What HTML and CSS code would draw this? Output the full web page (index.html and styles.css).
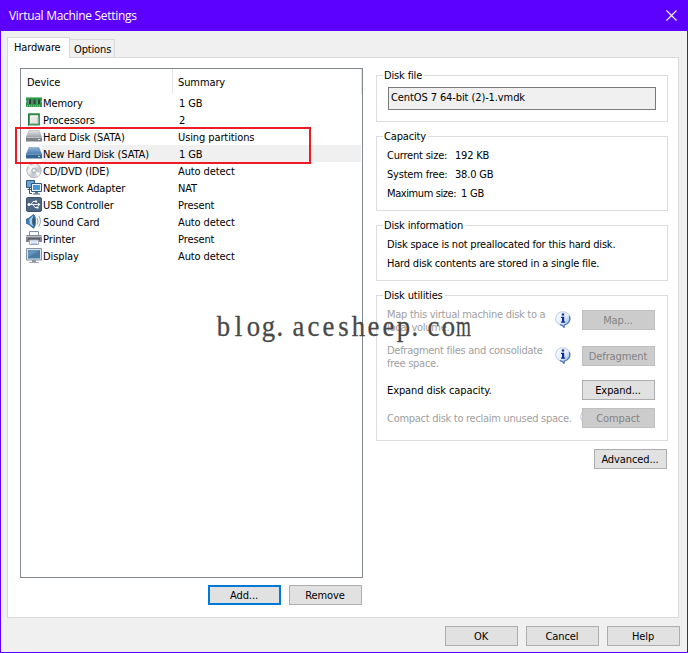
FILE: index.html
```html
<!DOCTYPE html>
<html lang="en">
<head>
<meta charset="utf-8">
<title>Virtual Machine Settings</title>
<link rel="stylesheet" href="styles.css">
</head>
<body>
<svg class="defs" width="0" height="0" aria-hidden="true">
  <defs>
    <linearGradient id="gInfo" x1="0" y1="0" x2="1" y2="1"><stop offset="0" stop-color="#fff"/><stop offset=".5" stop-color="#e4eefb"/><stop offset="1" stop-color="#7fa9dd"/></linearGradient>
    <linearGradient id="gGrey" x1="0" y1="0" x2="0" y2="1"><stop offset="0" stop-color="#e4e6e9"/><stop offset="1" stop-color="#9ea3aa"/></linearGradient>
    <linearGradient id="gBlue" x1="0" y1="0" x2="0" y2="1"><stop offset="0" stop-color="#8fb3d6"/><stop offset="1" stop-color="#4a7db0"/></linearGradient>
    <linearGradient id="gDisc" x1="0" y1="0" x2="1" y2="1"><stop offset="0" stop-color="#b4b8be"/><stop offset=".35" stop-color="#f4f4f6"/><stop offset=".6" stop-color="#c3c7cc"/><stop offset="1" stop-color="#eceef0"/></linearGradient>
    <symbol id="info" viewBox="0 0 16 17">
      <path d="M8 .8a7.2 6.8 0 0 0-3 13l2.200.7L9 16.600l.3-2.300A7.200 6.800 0 0 0 8 .8z" fill="url(#gInfo)" stroke="#a9bfdd" stroke-width=".8"/>
      <path d="M14.300 5.200a7 6.600 0 0 1-5 8.800L9 16.400 7.400 14.400 5 13.700" fill="none" stroke="#4d79b4" stroke-width="1.200"/>
      <path d="M6.800 2.500h2.400v2H6.800zM6 5.800h3.200v4.700h1v1.200H6v-1.200h1V7H6z" fill="#0b2d94"/>
    </symbol>
  </defs>
</svg>
<div class="window">
  <header class="titlebar">
    <span class="title">Virtual Machine Settings</span>
    <svg class="close" width="11" height="11" viewBox="0 0 11 11"><path d="M.5.5l10 10M10.5.5l-10 10" stroke="#fff" stroke-width="1.1"/></svg>
  </header>
  <main class="client">
    <nav class="tabs"><span class="tab active">Hardware</span><span class="tab">Options</span></nav>
    <section class="panel">
      <div class="left">
        <div class="list">
          <div class="head"><span class="c1">Device</span><span class="c2">Summary</span></div>
          <div class="row"><svg class="ic" viewBox="0 0 16 16"><path d="M0 2h16v3.500l-.7 1 .7 1V12H0V7.500l.7-1-.7-1z" fill="#2f9a4e"/><path d="M0 2.500h16" stroke="#7cc98b"/><path d="M2 4.500h3v4.500H2zM6.500 4.500h3v4.500h-3zM11 4.500h3v4.500h-3z" fill="#2c4438"/><path d="M2.500 4.500v4.500M7 4.500v4.500M11.500 4.500v4.500" stroke="#8ba393" stroke-width=".8"/><path d="M1 11h14" stroke="#b4d8ac" stroke-dasharray="1 1"/></svg><span class="name">Memory</span><span class="sum n">1 GB</span></div>
          <div class="row"><svg class="ic" viewBox="0 0 16 16"><path d="M2 1.500h12v12H2z" fill="#3a9c55"/><path d="M2.500 13.500V2h11" fill="none" stroke="#1f7a3b"/><path d="M4 3.500h8v8H4z" fill="#e4e7e5"/><path d="M4.500 11.500V4H12" fill="none" stroke="#fff"/><path d="M12 4.500v7H5" fill="none" stroke="#b3c4b8"/></svg><span class="name">Processors</span><span class="sum n">2</span></div>
          <div class="row"><svg class="ic" viewBox="0 0 16 16"><path d="M3 1.500h10l2.700 6.500H.3z" fill="url(#gGrey)" stroke="#a3a7ac" stroke-width=".5"/><path d="M0 8h16v4.500H0z" fill="#7c8188"/><path d="M.5 8.500h15" stroke="#c0c4c9"/><path d="M12 10h2v1h-2z" fill="#e6eaec"/></svg><span class="name">Hard Disk (SATA)</span><span class="sum">Using partitions</span></div>
          <div class="row selected"><svg class="ic" viewBox="0 0 16 16"><path d="M3 1.500h10l2.700 6.500H.3z" fill="url(#gBlue)" stroke="#6793bc" stroke-width=".5"/><path d="M0 8h16v4.500H0z" fill="#34648f"/><path d="M.5 8.500h15" stroke="#6796c0"/><path d="M12 10h2v1h-2z" fill="#b8d6ee"/></svg><span class="name">New Hard Disk (SATA)</span><span class="sum n">1 GB</span></div>
          <div class="row"><svg class="ic" viewBox="0 0 16 16"><circle cx="8" cy="7.500" r="7.200" fill="url(#gDisc)" stroke="#a4a8ad" stroke-width=".8"/><path d="M8 7.500L2 3.500 4 1.500zM8 7.500l6 3-2 3z" fill="#fff" opacity=".8"/><circle cx="8" cy="7.500" r="2.300" fill="#d6d9dd" stroke="#989da5" stroke-width=".7"/><circle cx="8" cy="7.500" r="1" fill="#fff"/></svg><span class="name">CD/DVD (IDE)</span><span class="sum">Auto detect</span></div>
          <div class="row"><svg class="ic" viewBox="0 0 16 16"><path d="M.5.5h8v7h-8z" fill="#6ba5d7" stroke="#31577f"/><path d="M3.500 8v5.500h2.500M1.500 9.500h4" fill="none" stroke="#31577f"/><path d="M5.500 3.500h10v8h-10z" fill="#e8eff5" stroke="#31577f"/><path d="M7 5h7v5H7z" fill="#4996d2"/><path d="M9 12h3v1.500H9z" fill="#527492"/><path d="M7 14h7" stroke="#31577f"/></svg><span class="name">Network Adapter</span><span class="sum">NAT</span></div>
          <div class="row"><svg class="ic" viewBox="0 0 16 16"><rect x=".5" y=".5" width="15" height="14" rx="1.500" fill="#4e6784" stroke="#3d546f"/><path d="M2 7.500h11M5 7.500l2-3h2.500M7 7.500l2 3h2" fill="none" stroke="#fff" stroke-width=".9"/><circle cx="3" cy="7.500" r="1.500" fill="#fff"/><path d="M12 5.700l2.500 1.800L12 9.300zM9 3.500h2v2H9zM10.500 9.500h2v2h-2z" fill="#fff"/></svg><span class="name">USB Controller</span><span class="sum">Present</span></div>
          <div class="row"><svg class="ic" viewBox="0 0 16 16"><path d="M.5 5L3 4 7.500.5q2 1 2 6.800t-2 7L3 10.500.5 9.500z" fill="#397eb5" stroke="#285b88" stroke-width=".8"/><path d="M3.500 5L7 2v10.500L3.500 9.500z" fill="#a8d1ed"/><ellipse cx="7.500" cy="7.300" rx="1.300" ry="4" fill="#315371"/><path d="M11 4q2 3.200 0 6.500M12.800 2q3.200 5.200 0 10.500" fill="none" stroke="#8197ac" stroke-width=".9"/></svg><span class="name">Sound Card</span><span class="sum">Auto detect</span></div>
          <div class="row"><svg class="ic" viewBox="0 0 16 16"><path d="M3.500.5h9V5h-9z" fill="#f8f9fb" stroke="#888e9a"/><path d="M1 4h14l1 1v6H0V5z" fill="#84868f"/><path d="M0 5.500h16" stroke="#bdbdca"/><path d="M2 8h12" stroke="#33353c"/><path d="M3.500 9h9v4.500h-9z" fill="#fff" stroke="#9ba4bf"/><path d="M5 11h6M5 12.500h6" stroke="#aac1ea" stroke-width=".8"/></svg><span class="name">Printer</span><span class="sum">Present</span></div>
          <div class="row"><svg class="ic" viewBox="0 0 16 16"><path d="M.5.5h15v11.500H.5z" fill="#dbe3e9" stroke="#8494a3"/><path d="M2 2h12v8.500H2z" fill="#4a7ba5"/><path d="M2 2h12L2 9z" fill="#6494b9"/><path d="M6 12h4v2H6z" fill="#8997a4"/><path d="M3 14.500h10" stroke="#9eabb6"/></svg><span class="name">Display</span><span class="sum">Auto detect</span></div>
        </div>
        <div class="actions"><button class="btn primary">Add...</button><button class="btn">Remove</button></div>
      </div>
      <div class="right">
        <fieldset class="g1"><legend>Disk file</legend><div class="field">CentOS 7 64-bit (2)-1.vmdk</div></fieldset>
        <fieldset class="g2"><legend>Capacity</legend>
          <div class="line"><span class="k">Current size:</span><span>192 KB</span></div>
          <div class="line"><span class="k">System free:</span><span>38.0 GB</span></div>
          <div class="line"><span class="k max">Maximum size:</span><span>1 GB</span></div>
        </fieldset>
        <fieldset class="g3"><legend>Disk information</legend>
          <div class="line">Disk space is not preallocated for this hard disk.</div>
          <div class="line">Hard disk contents are stored in a single file.</div>
        </fieldset>
        <fieldset class="g4"><legend>Disk utilities</legend>
          <div class="util tall off"><p>Map this virtual machine disk to a<br>local volume.</p><svg class="info"><use href="#info"/></svg><button class="btn" disabled>Map...</button></div>
          <div class="util tall off"><p>Defragment files and consolidate<br>free space.</p><svg class="info"><use href="#info"/></svg><button class="btn" disabled>Defragment</button></div>
          <div class="util"><p>Expand disk capacity.</p><button class="btn">Expand...</button></div>
          <div class="util off"><p>Compact disk to reclaim unused space.</p><svg class="info peek"><use href="#info"/></svg><button class="btn" disabled>Compact</button></div>
        </fieldset>
        <button class="btn advanced">Advanced...</button>
      </div>
    </section>
    <footer class="footer"><button class="btn">OK</button><button class="btn">Cancel</button><button class="btn">Help</button></footer>
  </main>
  <div class="highlight"></div>
  <div class="watermark"><span>b</span><span>l</span><span>o</span><span>g</span><span class="dot">.</span><span>a</span><span>c</span><span>e</span><span>s</span><span>h</span><span>e</span><span>e</span><span>p</span><span class="dot">.</span><span>c</span><span>o</span><span class="m">m</span></div>
</div>
</body>
</html>
```
FILE: styles.css
```css
* { box-sizing: border-box; }
body { margin: 0; font: 11px/14px "DejaVu Sans Condensed", "DejaVu Sans", sans-serif; font-stretch: condensed; letter-spacing: -0.1px; color: #000; }
.defs { position: absolute; }
.window { position: relative; width: 688px; height: 653px; border: 1px solid #5c00ff; background: #f0f0f0; display: flex; flex-direction: column; overflow: hidden; }
.titlebar { height: 30px; flex: none; background: #5c00ff; color: #fff; display: flex; align-items: center; justify-content: space-between; padding: 0 10px 0 8px; font: 12px/16px "Open Sans", "Noto Sans", sans-serif; letter-spacing: -0.3px; }
.close { margin-top: -2px; }
.client { flex: 1; display: flex; flex-direction: column; padding: 6px 7px 7px 6px; }
.tabs { display: flex; align-items: flex-end; height: 21px; position: relative; z-index: 1; }
.tab { height: 18px; border: 1px solid #d9d9d9; border-left: 0; border-bottom: 0; padding: 3px 4px 0; width: 45px; margin-bottom: 1px; white-space: nowrap; letter-spacing: -0.15px; }
.tab.active { width: 63px; height: 21px; border-left: 1px solid #d9d9d9; background: #fff; padding: 3px 6px 0; margin-bottom: 0; }
.panel { height: 561px; width: 672px; margin-top: -1px; background: #fff; border: 1px solid #d9d9d9; display: flex; padding: 10px 10px 0 12px; justify-content: space-between; }
.left { width: 343px; }
.list { height: 510px; border: 1px solid #828790; }
.head { display: flex; height: 25px; line-height: 28px; padding-left: 6px; }
.c1 { width: 146px; border-right: 1px solid #e5e5e5; }
.c2 { flex: 1; padding-left: 5px; border-right: 1px solid #e5e5e5; }
.row { display: flex; height: 17px; line-height: 20px; margin: 0 1px 0 5px; }
.ic { width: 16px; height: 16px; flex: none; margin-top: 1px; }
.name { width: 130px; padding-left: 1px; white-space: nowrap; }
.sum { flex: 1; padding-left: 6px; }
.sum.n { padding-left: 7px; }
.selected .name, .selected .sum { background: #f0f0f0; }
.actions { display: flex; justify-content: flex-end; gap: 8px; padding: 7px 1px 0 0; }
.btn { width: 73px; height: 20px; padding: 1px 1px 0 0; border: 1px solid #adadad; background: #e1e1e1; color: #000; font: inherit; letter-spacing: inherit; line-height: 17px; border-radius: 0; flex: none; }
.btn.primary { border: 2px solid #0078d7; line-height: 15px; }
.btn:disabled { border-color: #bfbfbf; background: #ccc; color: #838383; }
.right { width: 292px; display: flex; flex-direction: column; }
fieldset { margin: 0 0 7px; padding: 0 10px; border: 1px solid #dcdcdc; min-width: 0; }
legend { height: 14px; line-height: 15px; padding: 0 2px 0 1px; margin-left: -4px; letter-spacing: -0.15px; }
.g1 { height: 54px; }
.g2 { height: 82px; }
.g3 { height: 63px; }
.g4 { height: 153px; }
.field { height: 23px; width: 268px; margin: 5px 0 0 1px; border: 1px solid #7a7a7a; background: #f0f0f0; padding: 3px 2px; }
.line { height: 19px; line-height: 19px; white-space: nowrap; display: flex; letter-spacing: -0.2px; }
.line:nth-child(2) { margin-top: 3px; }
.k { width: 68px; }
.k.max { width: 74px; letter-spacing: -0.4px; }
.util { display: flex; height: 20px; margin-bottom: 10px; padding-right: 2px; }
.util p { margin: 0; width: 168px; line-height: 21px; flex: 1; white-space: nowrap; }
.util .btn { position: relative; }
.tall { height: 26px; }
.tall p { line-height: 13px; }
.tall:nth-child(2) { margin-top: 6px; }
.tall .btn { margin-top: 2px; }
.util:nth-child(4) { margin-bottom: 8px; }
.off { color: #a0a0a0; letter-spacing: -0.28px; }
.off .btn { letter-spacing: -0.1px; }
.info { width: 16px; height: 17px; flex: none; margin: 3px 11px 0 0; }
.info.peek { margin: 1px -14px 0 0; }
.advanced { align-self: flex-end; margin: 1px 1px 0 0; }
.footer { display: flex; justify-content: flex-end; gap: 8px; padding-top: 8px; }
.highlight { position: absolute; left: 14px; top: 126px; width: 296px; height: 37px; border: 2px solid #ed1c24; }
.watermark { position: absolute; left: 215px; top: 308px; display: flex; font: 29px/34px "Liberation Serif", serif; letter-spacing: 0; color: #484848; -webkit-text-stroke: 0.3px #484848; white-space: nowrap; }
.watermark span { width: 15px; display: flex; justify-content: center; transform: scaleX(.92); }
.watermark .dot { justify-content: flex-start; }
.watermark .m { transform: scaleX(.66); }
```
